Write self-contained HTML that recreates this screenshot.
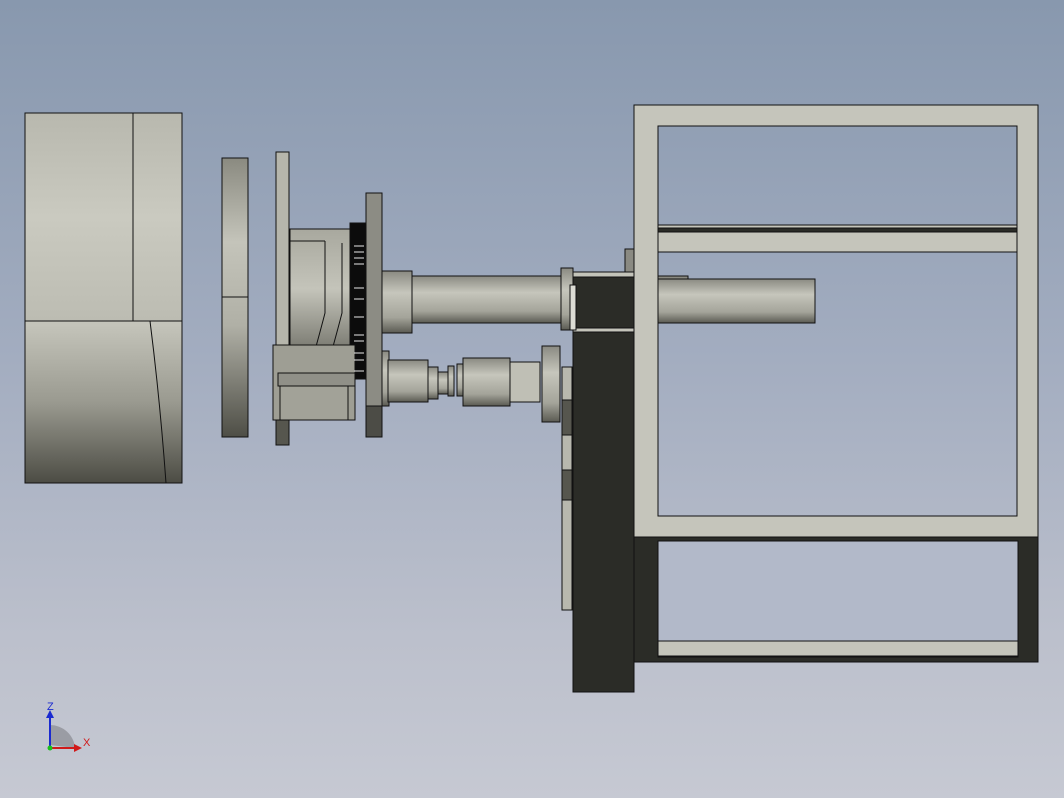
<!DOCTYPE html>
<html><head><meta charset="utf-8"><style>
html,body{margin:0;padding:0;width:1064px;height:798px;overflow:hidden;}
body{background:linear-gradient(#8898ae,#a3adc0 45%,#bcc0cc 80%,#c6c9d3);}
svg{display:block}
text{font-family:"Liberation Sans",sans-serif}
</style></head><body>
<svg width="1064" height="798" viewBox="0 0 1064 798" xmlns="http://www.w3.org/2000/svg">
<defs>
<linearGradient id="cylT" x1="0" y1="0" x2="0" y2="1"><stop offset="0" stop-color="#b8b8ae"/><stop offset="0.5" stop-color="#cacac0"/><stop offset="1" stop-color="#bcbcb2"/></linearGradient>
<linearGradient id="cylB" x1="0" y1="0" x2="0" y2="1"><stop offset="0" stop-color="#c6c6bc"/><stop offset="0.5" stop-color="#9a9a90"/><stop offset="1" stop-color="#4c4c44"/></linearGradient>
<linearGradient id="sh" x1="0" y1="0" x2="0" y2="1"><stop offset="0" stop-color="#8a8a82"/><stop offset="0.35" stop-color="#c6c6bc"/><stop offset="0.75" stop-color="#a4a49a"/><stop offset="1" stop-color="#5a5a52"/></linearGradient>
<linearGradient id="disc" x1="0" y1="0" x2="0" y2="1"><stop offset="0" stop-color="#8a8a80"/><stop offset="0.3" stop-color="#c4c4ba"/><stop offset="0.6" stop-color="#b0b0a6"/><stop offset="1" stop-color="#4e4e46"/></linearGradient>
<linearGradient id="hous" x1="0" y1="0" x2="0" y2="1"><stop offset="0" stop-color="#a8a89e"/><stop offset="0.4" stop-color="#c4c4ba"/><stop offset="1" stop-color="#56564e"/></linearGradient>
</defs>
<g stroke="#111" stroke-width="1">
<rect x="25" y="113" width="157" height="208" fill="url(#cylT)"/>
<rect x="25" y="321" width="157" height="162" fill="url(#cylB)"/>
<line x1="133" y1="113" x2="133" y2="321"/>
<path d="M150 321 Q160 400 166 483" fill="none"/>
<rect x="222" y="158" width="26" height="279" fill="url(#disc)"/>
<line x1="222" y1="297" x2="248" y2="297"/>
<rect x="276" y="152" width="13" height="293" fill="#b6b6ac"/>
<rect x="276" y="420" width="13" height="25" fill="#56564e"/>
<rect x="290" y="229" width="60" height="150" fill="url(#hous)"/>
<line x1="290" y1="241" x2="325" y2="241"/>
<path d="M325 241 V313 Q318 340 308 375" fill="none"/>
<path d="M342 243 V313 Q335 340 325 375" fill="none"/>
<rect x="350" y="223" width="16" height="156" fill="#0c0c0c"/>
<rect x="273" y="345" width="82" height="75" fill="#9e9e94"/>
<rect x="280" y="386" width="68" height="34" fill="#a2a298"/>
<rect x="278" y="373" width="77" height="13" fill="#909088"/>
<rect x="366" y="193" width="16" height="244" fill="#8c8c84"/>
<rect x="366" y="406" width="16" height="31" fill="#4c4c46"/>
<rect x="382" y="271" width="30" height="62" fill="url(#sh)"/>
<rect x="412" y="276" width="153" height="47" fill="url(#sh)"/>
<rect x="561" y="268" width="12" height="62" fill="url(#sh)"/>
<rect x="625" y="249" width="10" height="24" fill="#8a8a82"/>
<rect x="382" y="351" width="7" height="55" fill="url(#sh)"/>
<rect x="388" y="360" width="40" height="42" fill="url(#sh)"/>
<rect x="428" y="367" width="10" height="32" fill="url(#sh)"/>
<rect x="438" y="372" width="10" height="22" fill="url(#sh)"/>
<rect x="448" y="366" width="6" height="30" fill="url(#sh)"/>
<rect x="457" y="364" width="6" height="32" fill="url(#sh)"/>
<rect x="463" y="358" width="47" height="48" fill="url(#sh)"/>
<rect x="510" y="362" width="30" height="40" fill="#bfbfb5"/>
<rect x="542" y="346" width="18" height="76" fill="url(#sh)"/>
<rect x="635" y="276" width="53" height="10" fill="#8a8a82"/>
<rect x="658" y="279" width="157" height="44" fill="url(#sh)"/>
<rect x="562" y="367" width="10" height="243" fill="#b8b8ae"/>
<rect x="562" y="400" width="10" height="35" fill="#56564e"/>
<rect x="562" y="470" width="10" height="30" fill="#56564e"/>
<rect x="573" y="330" width="61" height="362" fill="#2b2c27"/>
<rect x="573" y="272" width="61" height="5" fill="#c4c4ba"/>
<rect x="573" y="277" width="61" height="51" fill="#2b2c27"/>
<rect x="573" y="328" width="61" height="4" fill="#c4c4ba"/>
<rect x="570" y="285" width="6" height="45" fill="#dcdcd4"/>
<rect x="634" y="537" width="404" height="125" fill="#2b2c27"/>
<rect x="658" y="541" width="360" height="116" fill="#b2b9c9"/>
<rect x="658" y="641" width="360" height="15" fill="#c4c4ba"/>
<path d="M634 105 H1038 V537 H634 Z M658 126 V516 H1017 V126 Z" fill="#c5c5bb" fill-rule="evenodd"/>
<rect x="658" y="225" width="359" height="3" fill="#c5c5bb"/>
<rect x="658" y="228" width="359" height="4" fill="#2b2c27"/>
<rect x="658" y="232" width="359" height="20" fill="#c5c5bb"/>
</g>
<g stroke="#e8e8e8" stroke-width="1">
<line x1="354" y1="246" x2="364" y2="246"/><line x1="354" y1="252" x2="364" y2="252"/>
<line x1="354" y1="258" x2="364" y2="258"/><line x1="354" y1="264" x2="364" y2="264"/>
<line x1="354" y1="288" x2="364" y2="288"/><line x1="354" y1="299" x2="364" y2="299"/>
<line x1="354" y1="317" x2="364" y2="317"/><line x1="354" y1="335" x2="364" y2="335"/>
<line x1="354" y1="341" x2="364" y2="341"/><line x1="354" y1="353" x2="364" y2="353"/>
<line x1="354" y1="360" x2="364" y2="360"/><line x1="354" y1="371" x2="364" y2="371"/>
</g>
<g>
<path d="M50 745 V725 A25 25 0 0 1 75 748 Z" fill="#9a9ca4"/>
<line x1="50" y1="748" x2="50" y2="715" stroke="#1a2ad0" stroke-width="2"/>
<path d="M46 718 L50 710 L54 718 Z" fill="#1a2ad0"/>
<line x1="50" y1="748" x2="76" y2="748" stroke="#d01a1a" stroke-width="2"/>
<path d="M74 744 L82 748 L74 752 Z" fill="#d01a1a"/>
<circle cx="50" cy="748" r="2.5" fill="#1ac01a"/>
<text x="47" y="710" font-size="11" fill="#1a2ad0">Z</text>
<text x="83" y="746" font-size="11" fill="#d01a1a">X</text>
</g>
</svg>
</body></html>
